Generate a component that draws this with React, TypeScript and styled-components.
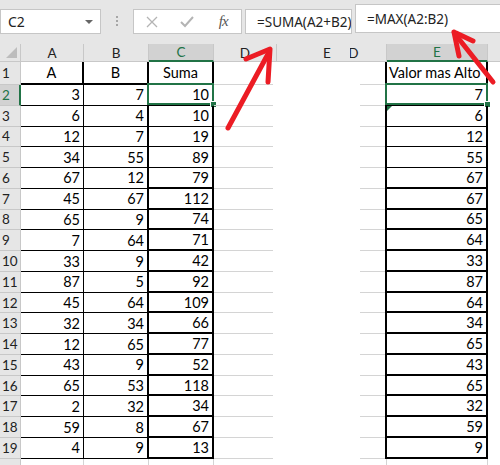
import React from 'react';
import styled, { createGlobalStyle, css } from 'styled-components';

const GREEN = '#217346';
const GRID = '#d4d4d4';

const Global = createGlobalStyle`
  html, body { margin: 0; padding: 0; background: #fff; }
  body { font-family: Lato, "Liberation Sans", sans-serif; }
  #root { width: 500px; height: 465px; }
`;

const Frame = styled.div`
  position: relative;
  width: 500px;
  height: 465px;
  overflow: hidden;
  background: #fff;
  display: flex;
  flex-direction: column;
`;

/* ---------- formula bar ---------- */
const TopBar = styled.div`
  height: 44px;
  flex: none;
  background: #e6e6e6;
  display: flex;
  align-items: flex-start;
`;

const Box = styled.div<{ $w: number; $top?: number; $h?: number; $ml?: number }>`
  box-sizing: border-box;
  width: ${p => p.$w}px;
  height: ${p => p.$h ?? 25}px;
  margin-top: ${p => p.$top ?? 9}px;
  margin-left: ${p => p.$ml ?? 0}px;
  flex: none;
  background: #fff;
  border: 1px solid #c6c6c6;
  display: flex;
  align-items: center;
  font-family: "Noto Sans", "Open Sans", sans-serif;
  font-size: 13.5px;
  color: #222;
  overflow: hidden;
`;

const NameText = styled.span`
  flex: 1;
  padding-left: 7px;
  font-size: 14px;
`;

const Caret = styled.span`
  width: 0;
  height: 0;
  margin-right: 7px;
  border-left: 4px solid transparent;
  border-right: 4px solid transparent;
  border-top: 4px solid #666;
`;

const Dots = styled.div`
  width: 32px;
  flex: none;
  margin-top: 16px;
  display: flex;
  flex-direction: column;
  align-items: center;
  gap: 2px;
  span {
    width: 2px;
    height: 2px;
    background: #a6a6a6;
  }
`;

const FuncButtons = styled.div`
  display: grid;
  grid-template-columns: repeat(3, 1fr);
  width: 100%;
  align-items: center;
  justify-items: center;
`;

const Fx = styled.span`
  font-family: "Liberation Serif", serif;
  font-style: italic;
  font-size: 15px;
  color: #555;
  letter-spacing: -1px;
`;

const FormulaText = styled.span`
  padding-left: 11px;
  white-space: nowrap;
`;

/* ---------- sheets ---------- */
const Body = styled.div`
  flex: 1;
  display: flex;
  overflow: hidden;
`;

const Panel = styled.div<{ $w: number }>`
  width: ${p => p.$w}px;
  flex: none;
  overflow: hidden;
`;

const Grid = styled.div<{ $cols: string; $shift?: number }>`
  display: grid;
  grid-template-columns: ${p => p.$cols};
  grid-template-rows: 18px 23px repeat(18, 20.78px) 10px;
  margin-left: ${p => -(p.$shift ?? 0)}px;
  width: max-content;
  font-size: 14.5px;
  color: #000;
`;

type Edge = 'none' | 'grid' | 'thin' | 'thick';

const edge = (e: Edge | undefined) => {
  switch (e) {
    case 'thin':
      return '1px solid #000';
    case 'thick':
      return '2px solid #000';
    case 'grid':
      return `1px solid ${GRID}`;
    default:
      return '0';
  }
};

const Corner = styled.div`
  box-sizing: border-box;
  background: #e6e6e6;
  border-right: 1px solid #c8c8c8;
  border-bottom: 1px solid #c8c8c8;
  position: relative;
  &::after {
    content: '';
    position: absolute;
    right: 3px;
    bottom: 3px;
    width: 0;
    height: 0;
    border-left: 11px solid transparent;
    border-bottom: 11px solid #bdbdbd;
  }
`;

const ColHead = styled.div<{ $sel?: boolean }>`
  box-sizing: border-box;
  background: ${p => (p.$sel ? '#d2d2d2' : '#e6e6e6')};
  color: ${p => (p.$sel ? GREEN : '#222')};
  border-right: 1px solid #c8c8c8;
  border-bottom: ${p => (p.$sel ? `2px solid ${GREEN}` : '1px solid #c8c8c8')};
  display: flex;
  align-items: center;
  justify-content: center;
  font-size: 13.5px;
`;

const RowHead = styled.div<{ $sel?: boolean }>`
  box-sizing: border-box;
  background: ${p => (p.$sel ? '#d2d2d2' : '#e6e6e6')};
  color: ${p => (p.$sel ? GREEN : '#222')};
  border-right: ${p => (p.$sel ? `2px solid ${GREEN}` : '1px solid #c8c8c8')};
  border-bottom: 1px solid #c8c8c8;
  display: flex;
  align-items: center;
  padding-left: 2px;
  font-size: 13.5px;
`;

const Cell = styled.div<{
  $r?: Edge;
  $b?: Edge;
  $align?: 'left' | 'right' | 'center';
  $line?: 'left' | 'right';
  $lineInset?: number;
}>`
  box-sizing: border-box;
  position: relative;
  display: flex;
  align-items: center;
  white-space: nowrap;
  justify-content: ${p =>
    p.$align === 'right' ? 'flex-end' : p.$align === 'center' ? 'center' : 'flex-start'};
  padding: ${p => (p.$align === 'right' ? '0 3px 0 0' : p.$align === 'left' ? '0 0 0 2px' : '0')};
  border-right: ${p => edge(p.$r)};
  border-bottom: ${p => edge(p.$b)};
  ${p =>
    p.$line &&
    css`
      background-image: linear-gradient(${GRID}, ${GRID});
      background-repeat: no-repeat;
      background-size: calc(100% - ${p.$lineInset ?? 0}px) 1px;
      background-position: ${p.$line} bottom;
    `}
`;

const Selection = styled.div`
  position: absolute;
  top: -2px;
  left: -2px;
  right: -2px;
  bottom: -1px;
  border: 2px solid ${GREEN};
  pointer-events: none;
  &::after {
    content: '';
    position: absolute;
    right: -5px;
    bottom: -5px;
    width: 5px;
    height: 5px;
    background: ${GREEN};
    border: 1px solid #fff;
  }
`;

const ErrorMark = styled.div`
  position: absolute;
  top: 0;
  left: 0;
  width: 0;
  height: 0;
  border-top: 5px solid ${GREEN};
  border-right: 5px solid transparent;
`;

const Arrows = styled.svg`
  position: absolute;
  left: 0;
  top: 0;
  pointer-events: none;
`;

const data: [number, number, number, number][] = [
  [3, 7, 10, 7],
  [6, 4, 10, 6],
  [12, 7, 19, 12],
  [34, 55, 89, 55],
  [67, 12, 79, 67],
  [45, 67, 112, 67],
  [65, 9, 74, 65],
  [7, 64, 71, 64],
  [33, 9, 42, 33],
  [87, 5, 92, 87],
  [45, 64, 109, 64],
  [32, 34, 66, 34],
  [12, 65, 77, 65],
  [43, 9, 52, 43],
  [65, 53, 118, 65],
  [2, 32, 34, 32],
  [59, 8, 67, 59],
  [4, 9, 13, 9],
];

const resultBottom = (r: number): Edge => (r >= 3 && r <= 5 ? 'thin' : 'thick');

const LeftSheet = () => (
  <Grid $cols="21px 63px 65px 65px 63px 101px">
    <Corner />
    <ColHead>A</ColHead>
    <ColHead>B</ColHead>
    <ColHead $sel>C</ColHead>
    <ColHead>D</ColHead>
    <ColHead>E</ColHead>

    <RowHead>1</RowHead>
    <Cell $align="center" $r="thick" $b="thick">A</Cell>
    <Cell $align="center" $r="thick" $b="thick">B</Cell>
    <Cell $align="center" $r="thick" $b="thick">Suma</Cell>
    <Cell $line="left" $lineInset={4} />
    <Cell />

    {data.map(([a, b, c], i) => {
      const r = i + 2;
      return (
        <React.Fragment key={r}>
          <RowHead $sel={r === 2}>{r}</RowHead>
          <Cell $align="right" $r="thin" $b="thin">{a}</Cell>
          <Cell $align="right" $r="thick" $b="thin">{b}</Cell>
          <Cell $align="right" $r="thick" $b={resultBottom(r)}>
            {c}
            {r === 2 && <Selection />}
          </Cell>
          <Cell $line="left" $lineInset={4} />
          <Cell />
        </React.Fragment>
      );
    })}

    <RowHead />
    <Cell $r="grid" />
    <Cell $r="grid" />
    <Cell $r="grid" />
    <Cell />
    <Cell />
  </Grid>
);

const RightSheet = () => (
  <Grid $cols="66px 101px 65px" $shift={29}>
    <ColHead>D</ColHead>
    <ColHead $sel>E</ColHead>
    <ColHead />

    <Cell $r="thick" $line="right" $lineInset={39} />
    <Cell $align="left" $r="thick" $b="thick">Valor mas Alto</Cell>
    <Cell />

    {data.map(([, , , e], i) => {
      const r = i + 2;
      return (
        <React.Fragment key={r}>
          <Cell $r="thick" $line="right" $lineInset={39} />
          <Cell $align="right" $r="thick" $b={resultBottom(r)}>
            {e}
            {r === 2 && <Selection />}
            {r === 3 && <ErrorMark />}
          </Cell>
          <Cell />
        </React.Fragment>
      );
    })}

    <Cell $r="grid" />
    <Cell $r="grid" />
    <Cell />
  </Grid>
);

export default function App() {
  return (
    <>
      <Global />
      <Frame>
        <TopBar>
          <Box $w={101}>
            <NameText>C2</NameText>
            <Caret />
          </Box>
          <Dots>
            <span />
            <span />
            <span />
          </Dots>
          <Box $w={109}>
            <FuncButtons>
              <svg width="12" height="12" viewBox="0 0 12 12">
                <path d="M1 1 L11 11 M11 1 L1 11" stroke="#b4b4b4" strokeWidth="1.3" fill="none" />
              </svg>
              <svg width="14" height="12" viewBox="0 0 14 12">
                <path d="M1 6 L5 10 L13 1" stroke="#b4b4b4" strokeWidth="2" fill="none" />
              </svg>
              <Fx>fx</Fx>
            </FuncButtons>
          </Box>
          <Box $w={107} $ml={3}>
            <FormulaText>=SUMA(A2+B2)</FormulaText>
          </Box>
          <Box $w={150} $ml={3} $top={4} $h={29}>
            <FormulaText>=MAX(A2:B2)</FormulaText>
          </Box>
        </TopBar>
        <Body>
          <Panel $w={350}>
            <LeftSheet />
          </Panel>
          <Panel $w={150}>
            <RightSheet />
          </Panel>
        </Body>
        <Arrows width="500" height="465" viewBox="0 0 500 465">
          <g stroke="#ec1c24" strokeWidth="5" strokeLinecap="round" strokeLinejoin="round" fill="none">
            <path d="M228 128 L268 54" />
            <path d="M246 59 L270 49 L268 82" />
            <path d="M493 82 L455 34" />
            <path d="M454 32 L473 41 M454 32 L459 56" />
          </g>
        </Arrows>
      </Frame>
    </>
  );
}
